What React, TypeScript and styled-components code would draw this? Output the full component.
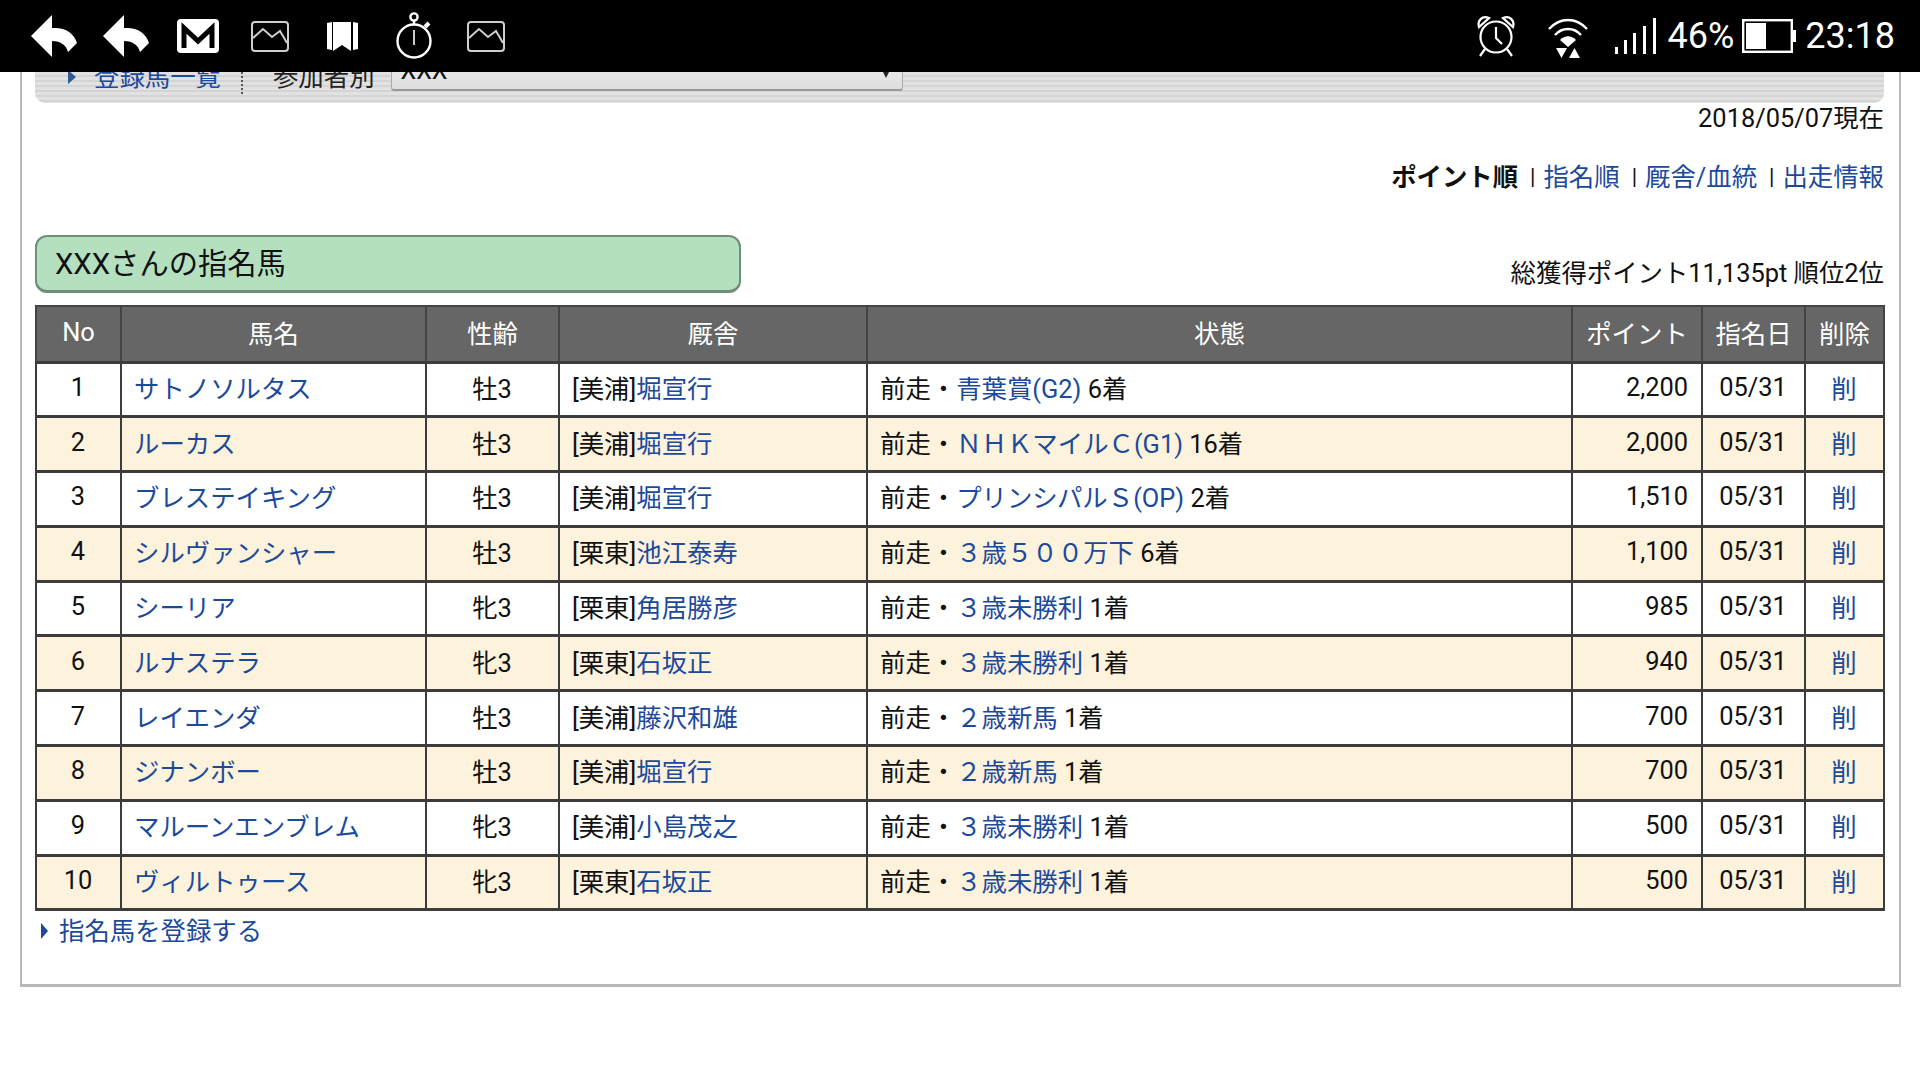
import React from "react"
import styled, { createGlobalStyle } from "styled-components"

type Horse = {
  no: number
  name: string
  age: string
  area: string
  trainer: string
  race: string
  result: string
  point: string
}

const horses: Horse[] = [
  { no: 1, name: "サトノソルタス", age: "牡3", area: "[美浦]", trainer: "堀宣行", race: "青葉賞(G2)", result: "6着", point: "2,200" },
  { no: 2, name: "ルーカス", age: "牡3", area: "[美浦]", trainer: "堀宣行", race: "ＮＨＫマイルＣ(G1)", result: "16着", point: "2,000" },
  { no: 3, name: "ブレステイキング", age: "牡3", area: "[美浦]", trainer: "堀宣行", race: "プリンシパルＳ(OP)", result: "2着", point: "1,510" },
  { no: 4, name: "シルヴァンシャー", age: "牡3", area: "[栗東]", trainer: "池江泰寿", race: "３歳５００万下", result: "6着", point: "1,100" },
  { no: 5, name: "シーリア", age: "牝3", area: "[栗東]", trainer: "角居勝彦", race: "３歳未勝利", result: "1着", point: "985" },
  { no: 6, name: "ルナステラ", age: "牝3", area: "[栗東]", trainer: "石坂正", race: "３歳未勝利", result: "1着", point: "940" },
  { no: 7, name: "レイエンダ", age: "牡3", area: "[美浦]", trainer: "藤沢和雄", race: "２歳新馬", result: "1着", point: "700" },
  { no: 8, name: "ジナンボー", age: "牡3", area: "[美浦]", trainer: "堀宣行", race: "２歳新馬", result: "1着", point: "700" },
  { no: 9, name: "マルーンエンブレム", age: "牝3", area: "[美浦]", trainer: "小島茂之", race: "３歳未勝利", result: "1着", point: "500" },
  { no: 10, name: "ヴィルトゥース", age: "牝3", area: "[栗東]", trainer: "石坂正", race: "３歳未勝利", result: "1着", point: "500" },
]

const columnWidths = [85, 305, 133, 308, 705, 130, 103, 79]

const GlobalStyle = createGlobalStyle`
  html, body {
    margin: 0;
    background: #fff;
    font-family: Roboto, "Noto Sans CJK JP", sans-serif;
    color: #111;
  }
`

const Page = styled.div`
  width: 1920px;
  height: 1080px;
  overflow: hidden;
  background: #fff;
`

const StatusBar = styled.div`
  height: 72px;
  background: #000;
  color: #fff;
  display: flex;
  justify-content: space-between;
  align-items: center;
  padding: 0 25px 0 31px;
  box-sizing: border-box;
`

const IconGroup = styled.div`
  display: flex;
  align-items: center;
`

const Icon = styled.svg<{ $left?: number }>`
  display: block;
  flex: none;
  margin-left: ${(props) => props.$left || 0}px;
`

const StatusText = styled.span<{ $left: number }>`
  font-size: 36px;
  line-height: 40px;
  margin-left: ${(props) => props.$left}px;
`

const Panel = styled.div`
  width: 1881px;
  height: 915px;
  margin-left: 20px;
  box-sizing: border-box;
  border: solid #b9b9b9;
  border-width: 0 2px 3px 2px;
  padding: 0 15px 0 13px;
`

const NavBar = styled.div`
  height: 31px;
  overflow: hidden;
  border-radius: 0 0 10px 10px;
  background: repeating-linear-gradient(#e2e2e2 0, #e2e2e2 3px, #d4d4d4 3px, #d4d4d4 5px);
`

const NavRow = styled.div`
  display: flex;
  align-items: flex-start;
  height: 47px;
  margin-top: -17px;
  padding-left: 33px;
`

const Triangle = styled.span`
  width: 0;
  height: 0;
  border-left: 8px solid #2a5a94;
  border-top: 7px solid transparent;
  border-bottom: 7px solid transparent;
  margin-top: 15px;
  margin-right: 18px;
`

const NavLink = styled.a`
  color: #1c4a9a;
  font-size: 25.4px;
  line-height: 44px;
`

const NavDivider = styled.span`
  height: 39px;
  border-left: 2px dotted #555;
  margin: 0 30px 0 20px;
`

const NavLabel = styled.span`
  font-size: 25.4px;
  line-height: 44px;
  color: #222;
`

const SelectBox = styled.div`
  width: 512px;
  height: 36px;
  margin-left: 16px;
  box-sizing: border-box;
  display: flex;
  justify-content: space-between;
  padding: 0 12px 0 9px;
  border: 1px solid #aaa;
  border-width: 0 1px 2px 1px;
  border-bottom-color: #999;
  border-radius: 0 0 3px 3px;
  background: linear-gradient(#f2f2f2, #dedede);
  font-size: 25px;
  line-height: 32px;
`

const SelectArrow = styled.span`
  width: 0;
  height: 0;
  margin-top: 15px;
  border-left: 4px solid transparent;
  border-right: 4px solid transparent;
  border-top: 8px solid #222;
`

const DateLine = styled.div`
  text-align: right;
  font-size: 25.4px;
  line-height: 31px;
`

const SortLine = styled.div`
  display: flex;
  justify-content: flex-end;
  margin-top: 28px;
  font-size: 25.4px;
  line-height: 30px;
`

const SortCurrent = styled.strong`
  font-weight: 700;
`

const SortBar = styled.span`
  margin: 0 8px 0 12px;
  font-size: 22px;
`

const TextLink = styled.a`
  color: #1c4a9a;
`

const TitleRow = styled.div`
  display: flex;
  justify-content: space-between;
  align-items: flex-end;
  margin-top: 43px;
`

const TitleBox = styled.h2`
  width: 706px;
  height: 58px;
  margin: 0;
  box-sizing: border-box;
  padding-left: 18px;
  background: #b4e0c0;
  border: 2px solid #6f8f78;
  border-width: 2px 2px 3px 2px;
  border-radius: 12px;
  font-size: 29.3px;
  font-weight: 400;
  line-height: 54px;
`

const TotalPoints = styled.div`
  font-size: 25.4px;
  line-height: 39px;
`

const HorseTable = styled.table`
  width: 1848px;
  margin-top: 12px;
  table-layout: fixed;
  border-collapse: collapse;
  font-size: 25.4px;
`

const HeadCell = styled.th`
  height: 56px;
  padding: 0 0 4px;
  box-sizing: border-box;
  background: #666;
  color: #fff;
  font-size: 25.4px;
  font-weight: 400;
  border: 2px solid #444;
`

const Cell = styled.td<{ $align?: string; $alt: boolean }>`
  height: 54.8px;
  padding: 0 13px 5px 12px;
  box-sizing: border-box;
  background: ${(props) => (props.$alt ? "#fdf2dc" : "#fff")};
  border: solid #3c3c3c;
  border-width: 3px 2px;
  text-align: ${(props) => props.$align || "left"};
  white-space: nowrap;
`

const FootLink = styled.div`
  display: flex;
  align-items: center;
  margin-top: 5px;
  padding-left: 6px;
  font-size: 25.4px;
  line-height: 30px;
`

const FootTriangle = styled.span`
  width: 0;
  height: 0;
  border-left: 7px solid #1c4a9a;
  border-top: 8px solid transparent;
  border-bottom: 8px solid transparent;
  margin-right: 11px;
`

const ReplyIcon = ({ left }: { left?: number }) => (
  <Icon $left={left} width="46" height="42" viewBox="0 0 46 42" fill="#fff">
    <path d="M0 21 21 0V13C34 12 43 18 46 28L37 37C35 30 30 26 21 26V42Z" />
  </Icon>
)

const PictureIcon = ({ left }: { left: number }) => (
  <Icon $left={left} width="38" height="31" viewBox="0 0 38 31" fill="none" stroke="#cfcfcf" strokeWidth="2">
    <rect x="1" y="1" width="36" height="29" rx="3" />
    <path d="M2 17 12 8 21 16 29 10 36 22" />
  </Icon>
)

const App: React.FC = () => {
  return (
    <Page>
      <GlobalStyle />
      <StatusBar>
        <IconGroup>
          <ReplyIcon />
          <ReplyIcon left={26} />
          <Icon $left={28} width="42" height="34" viewBox="0 0 42 34">
            <rect width="42" height="34" rx="4" fill="#fff" />
            <path d="M7 29V9L21 22 35 9V29" fill="none" stroke="#000" strokeWidth="5" />
          </Icon>
          <PictureIcon left={32} />
          <Icon $left={38} width="31" height="31" viewBox="0 0 31 31" fill="#fff">
            <path d="M0 2 5 1V29L0 28ZM6 1H24V30L15 24 6 30ZM26 1 31 2V28L26 29Z" />
          </Icon>
          <Icon $left={38} width="36" height="48" viewBox="0 0 36 48" fill="none" stroke="#fff" strokeWidth="2.4">
            <circle cx="18" cy="29" r="16.5" />
            <circle cx="18" cy="5" r="3.6" />
            <path d="M18 9V12.5" />
            <path d="M29 15 33 11" strokeWidth="4" />
            <path d="M18 18V33" strokeWidth="1.6" />
          </Icon>
          <PictureIcon left={35} />
        </IconGroup>
        <IconGroup>
          <Icon width="38" height="42" viewBox="0 0 38 42" fill="none" stroke="#fff" strokeWidth="2.2">
            <circle cx="19" cy="22" r="15.5" />
            <path d="M2 12C0 6 5 0 12 3ZM36 12C38 6 33 0 26 3Z" />
            <path d="M19 12V23L25 29" />
            <path d="M8 34 3 41M30 34 35 41" />
          </Icon>
          <Icon $left={32} width="42" height="43" viewBox="0 0 42 43">
            <path d="M2 14C13 2 29 2 40 14M8 20C15 12 27 12 34 20" fill="none" stroke="#fff" strokeWidth="2.4" />
            <path d="M13 25C18 20 24 20 29 25L21 32Z" fill="#fff" />
            <path d="M9 33H20L14.500 43ZM27.500 33 33 43H22Z" fill="#fff" />
          </Icon>
          <Icon $left={26} width="41" height="36" viewBox="0 0 41 36" fill="#fff">
            <rect x="0" y="29" width="3" height="7" />
            <rect x="9" y="22" width="3" height="14" />
            <rect x="18" y="15" width="3" height="21" />
            <rect x="28" y="8" width="3" height="28" />
            <rect x="38" y="0" width="3" height="36" />
          </Icon>
          <StatusText $left={12}>46%</StatusText>
          <Icon $left={8} width="54" height="34" viewBox="0 0 54 34">
            <rect x="1.200" y="1.200" width="48.600" height="31.600" fill="none" stroke="#fff" strokeWidth="2.400" />
            <rect x="4" y="4" width="20" height="26" fill="#fff" />
            <rect x="51" y="11" width="3" height="12" fill="#fff" />
          </Icon>
          <StatusText $left={9}>23:18</StatusText>
        </IconGroup>
      </StatusBar>

      <Panel>
        <NavBar>
          <NavRow>
            <Triangle />
            <NavLink>登録馬一覧</NavLink>
            <NavDivider />
            <NavLabel>参加者別</NavLabel>
            <SelectBox>
              XXX
              <SelectArrow />
            </SelectBox>
          </NavRow>
        </NavBar>

        <DateLine>2018/05/07現在</DateLine>

        <SortLine>
          <SortCurrent>ポイント順</SortCurrent>
          <SortBar>|</SortBar>
          <TextLink>指名順</TextLink>
          <SortBar>|</SortBar>
          <TextLink>厩舎/血統</TextLink>
          <SortBar>|</SortBar>
          <TextLink>出走情報</TextLink>
        </SortLine>

        <TitleRow>
          <TitleBox>XXXさんの指名馬</TitleBox>
          <TotalPoints>総獲得ポイント11,135pt 順位2位</TotalPoints>
        </TitleRow>

        <HorseTable>
          <colgroup>
            {columnWidths.map((width) => (
              <col key={width} width={width} />
            ))}
          </colgroup>
          <thead>
            <tr>
              {["No", "馬名", "性齢", "厩舎", "状態", "ポイント", "指名日", "削除"].map((label) => (
                <HeadCell key={label}>{label}</HeadCell>
              ))}
            </tr>
          </thead>
          <tbody>
            {horses.map((horse, i) => {
              const alt = i % 2 === 1
              return (
                <tr key={horse.no}>
                  <Cell $alt={alt} $align="center">{horse.no}</Cell>
                  <Cell $alt={alt}>
                    <TextLink>{horse.name}</TextLink>
                  </Cell>
                  <Cell $alt={alt} $align="center">{horse.age}</Cell>
                  <Cell $alt={alt}>
                    {horse.area}
                    <TextLink>{horse.trainer}</TextLink>
                  </Cell>
                  <Cell $alt={alt}>
                    前走・<TextLink>{horse.race}</TextLink> {horse.result}
                  </Cell>
                  <Cell $alt={alt} $align="right">{horse.point}</Cell>
                  <Cell $alt={alt} $align="center">05/31</Cell>
                  <Cell $alt={alt} $align="center">
                    <TextLink>削</TextLink>
                  </Cell>
                </tr>
              )
            })}
          </tbody>
        </HorseTable>

        <FootLink>
          <FootTriangle />
          <TextLink>指名馬を登録する</TextLink>
        </FootLink>
      </Panel>
    </Page>
  )
}

export default App
